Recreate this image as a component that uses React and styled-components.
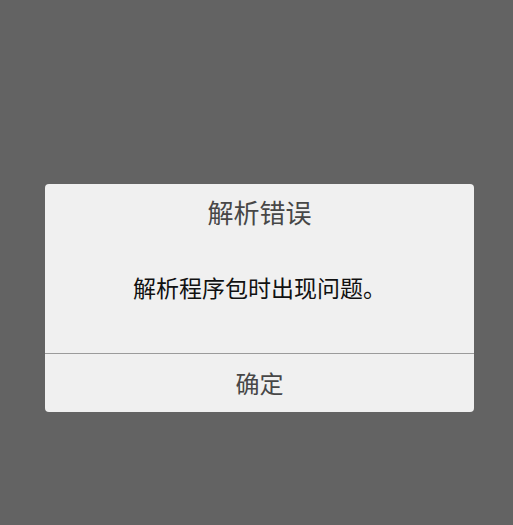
import React from "react";
import styled, { createGlobalStyle } from "styled-components";

const Global = createGlobalStyle`
  html, body { margin: 0; padding: 0; background: #636363; }
  body { font-family: "Noto Sans CJK SC", "Noto Sans", sans-serif; }
`;

const Screen = styled.div`
  width: 513px;
  height: 525px;
  background: #636363;
  padding: 184px 0 0 45px;
  box-sizing: border-box;
`;

const Dialog = styled.div`
  width: 429px;
  height: 228px;
  background: #f0f0f0;
  border-radius: 4px;
  display: flex;
  flex-direction: column;
  overflow: hidden;
`;

const Title = styled.div`
  margin-top: 13px;
  height: 30px;
  line-height: 30px;
  font-size: 26px;
  color: #474747;
  text-align: center;
`;

const Message = styled.div`
  margin-top: 45px;
  height: 30px;
  line-height: 30px;
  font-size: 23px;
  color: #111111;
  text-align: center;
  flex: 1;
`;

const Divider = styled.div`
  height: 1px;
  background: #9b9b9b;
`;

const Button = styled.button`
  height: 58px;
  border: none;
  background: transparent;
  font-family: inherit;
  font-size: 24px;
  line-height: 58px;
  color: #474747;
  padding: 0;
  text-align: center;
`;

export default function App() {
  return (
    <>
      <Global />
      <Screen>
        <Dialog>
          <Title>解析错误</Title>
          <Message>解析程序包时出现问题。</Message>
          <Divider />
          <Button>确定</Button>
        </Dialog>
      </Screen>
    </>
  );
}
